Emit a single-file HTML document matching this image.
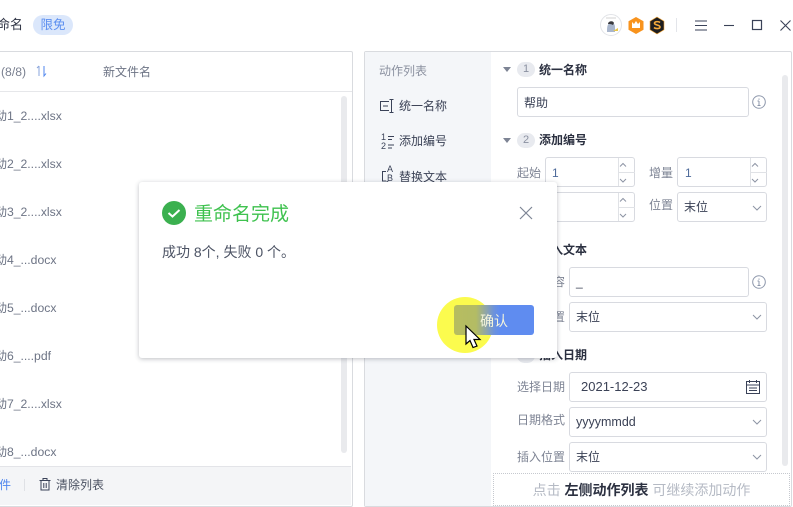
<!DOCTYPE html>
<html><head><meta charset="utf-8"><style>
html,body{margin:0;padding:0;background:#fff}
body{width:793px;height:507px;position:relative;overflow:hidden;font-family:"Liberation Sans","Noto Sans CJK SC",sans-serif;font-size:12px;color:#3b4256}
.a{position:absolute;white-space:nowrap;line-height:18px}
.b{position:absolute;box-sizing:border-box;border:1px solid #d8dae0;border-radius:3px;background:#fff}
.f{color:#6d7485;font-size:12.2px}
.l{color:#7e8494}
.h{font-weight:bold;color:#2b3040}
.c{position:absolute;border-radius:10px;background:#e8eaef;color:#8a90a0;text-align:center;line-height:15px;font-size:11px;height:15px;width:18px}
.t{position:absolute;width:0;height:0;border-left:4px solid transparent;border-right:4px solid transparent;border-top:5px solid #7d8494}
svg{position:absolute;overflow:visible}
</style></head><body>
<div class="a" style="left:-10px;top:16px;font-size:13px;color:#2f3445;width:33px;overflow:hidden;text-align:right">命名</div>
<div class="a" style="left:33px;top:15px;width:40px;height:20px;border-radius:10px;background:#dbe7fb;color:#5c8ff0;text-align:center;line-height:20px;font-size:12.5px">限免</div>

<!-- top right -->
<svg style="left:0;top:0" width="793" height="60" fill="none">
<circle cx="611" cy="25" r="10.5" fill="#fff" stroke="#e2e4e8"/>
<path d="M607 32c0-4 0-8 3-9 3-1 5 1 5 4v5z" fill="#a9b6cc"/><path d="M608 24c0-3 5-4 6-1l-1 2c-2-1-3-1-5-1z" fill="#3a3a3e"/><path d="M613 31l5-3 0 3z" fill="#e8c64a"/><path d="M606 18h10" stroke="#c8c8c8" stroke-width=".8"/>
<path d="M636 17l7.500 4.200v8.600l-7.500 4.200-7.500-4.200v-8.600z" fill="#f8931d"/><path d="M632 22l2 2 2-3 2 3 2-2v6h-8z" fill="#fff"/>
<path d="M657 17l7 4.200v8.600l-7 4.200-7-4.200v-8.600z" fill="#1d1d1f" stroke="#f3a83a" stroke-width=".6"/>
<path d="M660 22.500c-1-1-5-1.500-5.500 .5-.5 2.500 5.500 1.500 5.500 4 0 2-4.500 2-6 .5" stroke="#f5ab3c" stroke-width="1.600"/>
<path d="M676.500 18v14" stroke="#e3e5ea"/>
<path d="M695 21h12M695 25.500h12M695 30h12" stroke="#3a4258" stroke-width="1.100"/>
<path d="M724 25.500h10" stroke="#3a4258" stroke-width="1.100"/>
<rect x="752.500" y="20.500" width="9" height="9" stroke="#3a4258" stroke-width="1.200"/>
<path d="M780.500 20.500l10 10M790.500 20.500l-10 10" stroke="#3a4258" stroke-width="1.100"/>
</svg>

<!-- left panel -->
<div style="position:absolute;left:-5px;top:51px;width:358px;height:456px;box-sizing:border-box;border:1px solid #d9dbdf;border-radius:2px;background:#fff"></div>
<div style="position:absolute;left:0;top:91px;width:352px;height:1px;background:#e6e7ea"></div>
<div class="a f" style="left:1px;top:63px;color:#7a8090">(8/8)</div>
<svg style="left:36px;top:65px" width="12" height="13" fill="none"><path d="M3 1v10M3 1L1 3" stroke="#8aa5dc"/><path d="M8 1v10l2-2.500" stroke="#4f86ee"/></svg>
<div class="a f" style="left:103px;top:63px;font-size:12px">新文件名</div>
<div style="position:absolute;left:341px;top:96px;width:6px;height:357px;border-radius:3px;background:#e9eaed"></div>
<div class="a f" style="left:-12px;top:107px;">&nbsp;&nbsp;动1_2....xlsx</div>
<div class="a f" style="left:-12px;top:155px;">&nbsp;&nbsp;动2_2....xlsx</div>
<div class="a f" style="left:-12px;top:203px;">&nbsp;&nbsp;动3_2....xlsx</div>
<div class="a f" style="left:-12px;top:251px;">&nbsp;&nbsp;动4_...docx</div>
<div class="a f" style="left:-12px;top:299px;">&nbsp;&nbsp;动5_...docx</div>
<div class="a f" style="left:-12px;top:347px;">&nbsp;&nbsp;动6_....pdf</div>
<div class="a f" style="left:-12px;top:395px;">&nbsp;&nbsp;动7_2....xlsx</div>
<div class="a f" style="left:-12px;top:443px;">&nbsp;&nbsp;动8_...docx</div>
<div style="position:absolute;left:0;top:466px;width:351px;height:39px;background:#f4f5f7;border-top:1px solid #e3e4e8;box-sizing:border-box"></div>
<div class="a" style="left:-1px;top:476px;color:#4f86ee;width:12px;overflow:hidden;text-align:right;direction:rtl">件</div>
<div style="position:absolute;left:24px;top:479px;width:1px;height:12px;background:#dfe1e5"></div>
<svg style="left:39px;top:478px" width="12" height="13" fill="none" stroke="#3a4258"><path d="M.5 2.500h11M2 2.500v9.500h8v-9.500M4 2.500v-2h4v2M4.800 5v5M7.200 5v5"/></svg>
<div class="a" style="left:56px;top:476px;color:#4a5162">清除列表</div>

<!-- right panel -->
<div style="position:absolute;left:364px;top:51px;width:428px;height:456px;box-sizing:border-box;border:1px solid #d9dbdf;border-radius:2px;background:#fff"></div>
<div style="position:absolute;left:365px;top:52px;width:126px;height:454px;background:#f4f6f9"></div>
<div class="a" style="left:379px;top:62px;color:#8b91a0">动作列表</div>
<svg style="left:380px;top:99px" width="15" height="14" fill="none" stroke="#3a4258"><path d="M9 2.500H.5v9H9M3 7h5M11.500 .5v13M9.500 .5h4M9.500 13.500h4"/></svg>
<div class="a" style="left:399px;top:97px;color:#3b4256">统一名称</div>
<svg style="left:381px;top:135px" width="14" height="15" fill="none" stroke="#3a4258"><path d="M7 1.500h6M7 4.500h4M7 10h6M7 13h4"/></svg>
<div class="a" style="left:381px;top:133px;font-size:9px;line-height:9px;color:#3a4258">1<br>2</div>
<div class="a" style="left:399px;top:132px;color:#3b4256">添加编号</div>
<svg style="left:381px;top:170px" width="16" height="15" fill="none" stroke="#3a4258"><path d="M5 1.500H1.500v9.500H5M2 12.500h5M5.500 11l2 1.500-2 1.500"/></svg>
<div class="a" style="left:387px;top:165px;font-size:9px;line-height:9px;color:#3a4258">A<br>B</div>
<div class="a" style="left:399px;top:168px;color:#3b4256">替换文本</div>

<div style="position:absolute;left:782px;top:75px;width:6px;height:391px;border-radius:3px;background:#e9eaed"></div>

<div class="t" style="left:503px;top:67px"></div><div class="c" style="left:517px;top:62px">1</div><div class="a h" style="left:539px;top:61px">统一名称</div>
<div class="b" style="left:517px;top:87px;width:232px;height:30px"></div><div class="a" style="left:524px;top:94px">帮助</div>
<svg style="left:752px;top:95px" width="14" height="14" fill="none" stroke="#8d97ab"><circle cx="7" cy="7" r="6.300"/><path d="M7 6v4.500M5.500 6H7M5.500 10.500h3M7 3.500v1.200"/></svg>

<div class="t" style="left:503px;top:138px"></div><div class="c" style="left:517px;top:133px">2</div><div class="a h" style="left:539px;top:131px">添加编号</div>
<div class="a l" style="left:517px;top:164px">起始</div>
<div class="b" style="left:545px;top:157px;width:90px;height:30px"></div>
<div class="a" style="left:552px;top:164px;color:#4e6a9a">1</div>
<div class="a l" style="left:649px;top:164px">增量</div>
<div class="b" style="left:677px;top:157px;width:90px;height:30px"></div>
<div class="a" style="left:685px;top:164px;color:#4e6a9a">1</div>
<div class="b" style="left:545px;top:192px;width:90px;height:30px"></div>
<div class="a l" style="left:649px;top:196px">位置</div>
<div class="b" style="left:677px;top:192px;width:90px;height:30px"></div>
<div class="a" style="left:684px;top:198px">末位</div>

<div class="a h" style="left:539px;top:241px">插入文本</div>
<div class="a l" style="left:541px;top:273px">内容</div>
<div class="b" style="left:569px;top:267px;width:180px;height:30px"></div>
<div class="a" style="left:576px;top:273px">_</div>
<svg style="left:752px;top:275px" width="14" height="14" fill="none" stroke="#8d97ab"><circle cx="7" cy="7" r="6.300"/><path d="M7 6v4.500M5.500 6H7M5.500 10.500h3M7 3.500v1.200"/></svg>
<div class="a l" style="left:541px;top:308px">位置</div>
<div class="b" style="left:569px;top:302px;width:198px;height:30px"></div>
<div class="a" style="left:576px;top:308px">末位</div>

<div class="c" style="left:517px;top:348px">4</div><div class="a h" style="left:539px;top:346px">插入日期</div>
<div class="a l" style="left:517px;top:378px">选择日期</div>
<div class="b" style="left:569px;top:372px;width:198px;height:30px"></div>
<div class="a" style="left:581px;top:378px;font-size:13px">2021-12-23</div>
<svg style="left:746px;top:380px" width="14" height="14" fill="none" stroke="#3a4258"><rect x=".5" y="1.500" width="13" height="12"/><path d="M.5 5h13M3.500 0v3M10.500 0v3M3 8h8M3 10.500h8" /></svg>
<div class="a l" style="left:517px;top:411px">日期格式</div>
<div class="b" style="left:569px;top:407px;width:198px;height:30px"></div>
<div class="a" style="left:576px;top:413px;font-size:12.500px">yyyymmdd</div>
<div class="a l" style="left:517px;top:448px">插入位置</div>
<div class="b" style="left:569px;top:442px;width:198px;height:30px"></div>
<div class="a" style="left:576px;top:448px">末位</div>

<svg style="left:0;top:0" width="793" height="507" fill="none" stroke="#8d94a4">
<path d="M620 166.500l3-3 3 3M620 179l3 3 3-3M620 201.500l3-3 3 3M620 214l3 3 3-3M752 166.500l3-3 3 3M752 179l3 3 3-3M753 206l4 4 4-4M753 315l4 4 4-4M753 420l4 4 4-4M753 455l4 4 4-4" />
<path d="M618.500 158v28M618.500 193v28M750.500 158v28M619 172.500h16M619 207.500h16M751 172.500h16" stroke="#e0e2e6"/>
</svg>

<div style="position:absolute;left:493px;top:473px;width:297px;height:33px;box-sizing:border-box;border:1px dotted #c6c9cf;background:#fff;text-align:center;line-height:33px;color:#b5bac4;font-size:14px;white-space:nowrap">点击 <b style="color:#2b3040">左侧动作列表</b> 可继续添加动作</div>

<!-- dialog -->
<div style="position:absolute;left:139px;top:182px;width:418px;height:176px;background:#fff;border-radius:3px;box-shadow:0 1px 5px rgba(40,45,60,.3)"></div>
<svg style="left:162px;top:201px" width="24" height="24" fill="none"><circle cx="12" cy="12" r="12" fill="#3bb04f"/><path d="M6.500 12l4 3.500 7-6.500" stroke="#fff" stroke-width="2"/></svg>
<div class="a" style="left:194px;top:203px;font-size:19px;line-height:24px;color:#3fc24f">重命名完成</div>
<svg style="left:519px;top:206px" width="14" height="14" fill="none" stroke="#7d8595" stroke-width="1.200"><path d="M1 1l12 12M13 1L1 13"/></svg>
<div class="a" style="left:162px;top:243px;font-size:14px;color:#4c5364">成功 8个, 失败 0 个。</div>
<div style="position:absolute;left:437px;top:297px;width:56px;height:56px;border-radius:50%;background:radial-gradient(circle,#fbfb4e 0,#fbfb4e 82%,#fcfc95 92%,#fdfdc8 100%)"></div>
<div style="position:absolute;left:454px;top:305px;width:80px;height:30px;border-radius:3px;background:linear-gradient(90deg,#b7bd60 0,#b3bc64 22px,#8fa5a8 32px,#6c92dc 40px,#5f8cf0 46px,#5f8cf0 100%)"></div>
<div class="a" style="left:480px;top:312px;font-size:14px;color:#f5f5dc">确认</div>
<svg style="left:465px;top:325px" width="18" height="26"><path d="M1 1v18l4-3.500 3 7 4-1.500-3-6.500h6z" fill="#fff" stroke="#000" stroke-width="1.200"/></svg>
</body></html>
